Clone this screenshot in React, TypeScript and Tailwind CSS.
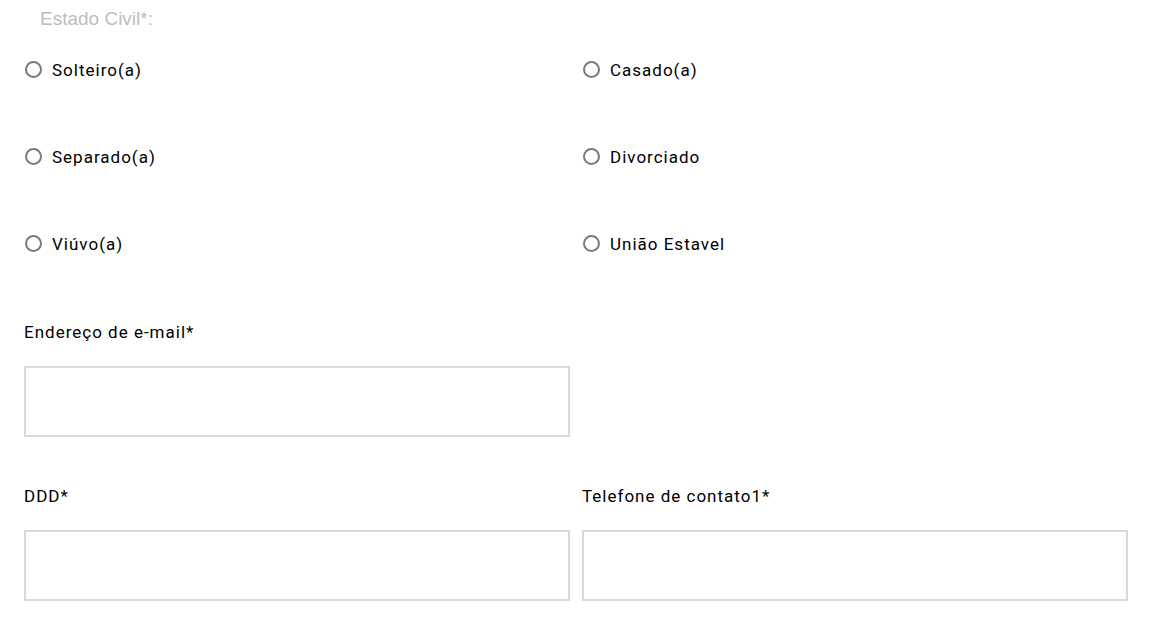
import React from "react";

const Radio = ({ label }: { label: string }) => (
  <label className="flex items-center h-[24px]">
    <span className="w-[17px] h-[17px] rounded-full border-2 border-[#7a7a7a] ml-[1px] mr-[10px] shrink-0" />
    <span className="text-[17px] tracking-[1px] text-black mt-[3px]">{label}</span>
  </label>
);

const Field = ({ label }: { label: string }) => (
  <div className="flex flex-col">
    <div className="text-[17px] tracking-[1px] text-black h-[24px] leading-[24px]">{label}</div>
    <div className="mt-[22px] h-[71px] border-2 border-[#d9d9d9] bg-white" />
  </div>
);

export default function App() {
  return (
    <div className="bg-white w-[1153px] h-[628px] overflow-hidden pl-[24px] pr-[25px]" style={{ fontFamily: "Roboto, 'Liberation Sans', sans-serif" }}>
      <div className="pt-[7px] pl-[16px] text-[19px] leading-[24px] text-[#bdbdbd]" style={{ fontFamily: "'Liberation Sans', Arial, sans-serif" }}>
        Estado Civil*:
      </div>
      <div className="grid grid-cols-2 gap-x-[12px] mt-[26px]">
        <div className="h-[87px]"><Radio label="Solteiro(a)" /></div>
        <div className="h-[87px]"><Radio label="Casado(a)" /></div>
        <div className="h-[87px]"><Radio label="Separado(a)" /></div>
        <div className="h-[87px]"><Radio label="Divorciado" /></div>
        <div className="h-[89px]"><Radio label="Viúvo(a)" /></div>
        <div className="h-[89px]"><Radio label="União Estavel" /></div>
      </div>
      <div className="grid grid-cols-2 gap-x-[12px]">
        <Field label="Endereço de e-mail*" />
        <div />
      </div>
      <div className="grid grid-cols-2 gap-x-[12px] mt-[47px]">
        <Field label="DDD*" />
        <Field label="Telefone de contato1*" />
      </div>
    </div>
  );
}
